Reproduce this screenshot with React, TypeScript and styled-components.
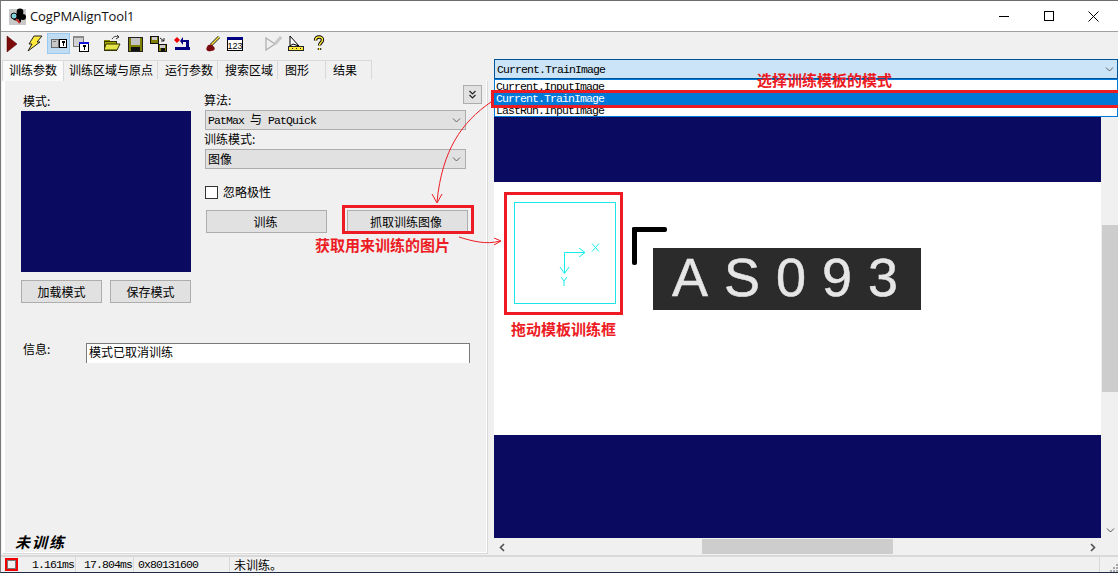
import React from "react";
import styled, { createGlobalStyle } from "styled-components";

const Global = createGlobalStyle`
  html, body { margin: 0; padding: 0; background: #f0f0f0; }
  * { box-sizing: border-box; }
`;
const CJK = `"Noto Sans CJK SC", "Liberation Sans", sans-serif`;

const Root = styled.div`
  position: relative; width: 1118px; height: 573px; overflow: hidden;
  display: flex; flex-direction: column;
  background: #f0f0f0; font: 12px/16px ${CJK}; color: #000;
  border-top: 1px solid #6d6d6d; border-left: 1px solid #7a7a7a; border-bottom: 1px solid #1f2a44;
`;
const TitleBar = styled.div`
  height: 31px; flex: none; display: flex; align-items: center; background: #fff;
  border-bottom: 1px solid #a0a0a0; padding: 0 2px 0 8px;
`;
const TitleText = styled.div`
  font: 13px/16px "Open Sans", "Liberation Sans", sans-serif; margin-left: 4px; flex: 1; color: #111; letter-spacing: -0.1px;
`;
const WinBtn = styled.div`width: 45px; height: 30px; display: flex; align-items: center; justify-content: center; flex: none;`;
const Toolbar = styled.div`height: 27px; flex: none; display: flex; align-items: flex-start; padding-top: 1px;`;
const ToolBtn = styled.div<{ $on?: boolean; $gap?: number }>`
  width: 23px; height: 21px; flex: none; margin-left: ${(p) => p.$gap ?? 0}px;
  display: flex; align-items: center; justify-content: center;
  background: ${(p) => (p.$on ? "#bfdcf2" : "transparent")};
  box-shadow: ${(p) => (p.$on ? "inset 0 0 0 1px #99c9ee" : "none")};
`;
const Icon = styled.svg.attrs({ width: 17, height: 17, viewBox: "0 0 17 17" })`display: block; shape-rendering: crispEdges;`;

const Main = styled.div`flex: 1; min-height: 0; display: flex;`;
const LeftPane = styled.div`width: 493px; flex: none; display: flex; flex-direction: column; padding-left: 1px;`;
const Tabs = styled.div`height: 21px; flex: none; display: flex; align-items: flex-end; position: relative; z-index: 1;`;
const Tab = styled.div<{ $w: number; $pad: number; $on?: boolean }>`
  width: ${(p) => p.$w}px; height: ${(p) => (p.$on ? 21 : 19)}px; flex: none;
  background: ${(p) => (p.$on ? "#fafafa" : "#f0f0f0")};
  border: 1px solid #d9d9d9; border-bottom: none; border-left-width: ${(p) => (p.$on ? 1 : 0)}px;
  padding-left: ${(p) => p.$pad}px; font-size: 12px; line-height: ${(p) => (p.$on ? 18 : 17)}px; white-space: nowrap;
  margin-bottom: ${(p) => (p.$on ? -1 : 1)}px;
`;
const Panel = styled.div`
  position: relative; width: 485px; height: 473px; flex: none; display: flex; flex-direction: column;
  background: #f0f0f0; border-left: 3px solid #fff; border-right: 1px solid #fff; border-bottom: 1px solid #fff;
  box-shadow: 1px 1px 0 #d9d9d9; padding: 14px 0 0 16px;
`;
const TopRow = styled.div`display: flex; gap: 14px;`;
const ModelCol = styled.div`width: 170px; flex: none; display: flex; flex-direction: column;`;
const FieldLabel = styled.div<{ $indent?: number }>`
  height: 17px; margin-left: ${(p) => p.$indent ?? 2}px; line-height: 14px; white-space: nowrap;
`;
const ModelImage = styled.div`height: 161px; background: #0a0a60;`;
const BtnRow = styled.div<{ $top: number; $gap: number; $left?: number }>`
  display: flex; gap: ${(p) => p.$gap}px; margin-top: ${(p) => p.$top}px; margin-left: ${(p) => p.$left ?? 0}px;
`;
const PushBtn = styled.div<{ $w: number; $nudge?: number }>`
  width: ${(p) => p.$w}px; height: 23px; flex: none; background: #e1e1e1; border: 1px solid #adadad;
  display: flex; align-items: center; justify-content: center; font-size: 12px;
  padding-right: ${(p) => p.$nudge ?? 0}px;
`;
const AlgoCol = styled.div`width: 261px; flex: none; display: flex; flex-direction: column; margin-top: -1px;`;
const Select = styled.div`
  height: 20px; background: #e1e1e1; border: 1px solid #adadad; display: flex; align-items: center;
  padding: 0 4px 0 2px; justify-content: space-between; font-size: 12px; flex: none; margin-bottom: 2px;
`;
const Latin = styled.span`font: 11.5px/16px "Liberation Mono", monospace; letter-spacing: -0.9px; white-space: pre;`;
const CheckRow = styled.div`display: flex; align-items: center; gap: 5px; margin-top: 14px; height: 15px; font-size: 12px; line-height: 14px;`;
const CheckLabel = styled.span`position: relative; top: -1px;`;
const CheckBox = styled.div`width: 13px; height: 13px; background: #fff; border: 1px solid #333; flex: none;`;
const Collapse = styled.div`
  position: absolute; left: 458px; top: 5px; width: 19px; height: 19px; background: #e1e1e1; border: 1px solid #adadad;
  display: flex; align-items: center; justify-content: center;
`;
const InfoRow = styled.div`display: flex; margin-top: 40px; align-items: flex-start;`;
const InfoLabel = styled.div`width: 65px; padding: 0 0 0 2px; flex: none; margin-top: -2px; font-size: 12px;`;
const InfoBox = styled.div`
  width: 384px; height: 20px; background: #fff; border: 1px solid #7a7a7a; border-bottom: none;
  padding-left: 2px; line-height: 15px; font-size: 12px;
`;
const Untrained = styled.div`
  margin-top: auto; margin-left: -6px; margin-bottom: 1px; font: italic bold 15px/18px ${CJK}; letter-spacing: 2px;
`;

const RightPane = styled.div`flex: 1; min-width: 0; position: relative; display: flex; flex-direction: column;`;
const Combo = styled.div`
  height: 20px; flex: none; background: #cce4f7; border: 1px solid #005499; display: flex; align-items: center;
  justify-content: space-between; padding: 1px 3px 0 2px;
`;
const DropList = styled.div`
  position: absolute; z-index: 2; left: 0; right: 0; top: 20px; height: 38px; padding-top: 1px;
  background: #fff; border: 1px solid #0078d7; overflow: hidden;
`;
const DropItem = styled.div<{ $on?: boolean }>`
  height: 12px; padding-left: 1px; display: flex; align-items: center;
  background: ${(p) => (p.$on ? "#0078d7" : "transparent")}; color: ${(p) => (p.$on ? "#fff" : "#000")};
`;
const CanvasRow = styled.div`flex: 1; min-height: 0; display: flex; margin-top: 1px;`;
const Canvas = styled.div`position: relative; width: 607px; flex: none; display: flex; flex-direction: column; overflow: hidden;`;
const NavyBand = styled.div<{ $h: number }>`height: ${(p) => p.$h}px; flex: none; background: #0a0a60;`;
const WhiteBand = styled.div`flex: 1; background: #fff;`;
const VScroll = styled.div`flex: 1; margin-left: 1px; position: relative; display: flex; justify-content: center; align-items: flex-end; padding-bottom: 3px;`;
const VThumb = styled.div`position: absolute; left: 0; right: 0; top: 145px; height: 167px; background: #cdcdcd;`;
const HScroll = styled.div`
  height: 16px; flex: none; margin-top: 1px; position: relative; display: flex; justify-content: space-between; align-items: center; padding: 0 21px 0 4px;
`;
const HThumb = styled.div`position: absolute; left: 208px; width: 191px; top: 0; height: 15px; background: #cdcdcd;`;
const Chev = styled.svg.attrs({ width: 9, height: 9, viewBox: "0 0 9 9" })`display: block;`;

const StatusBar = styled.div`height: 17px; flex: none; display: flex; border-top: 2px solid #d9d9d9; align-items: stretch;`;
const LedCell = styled.div`width: 18px; flex: none; display: flex; align-items: center; padding-left: 4px;`;
const StatusCell = styled.div<{ $w: number; $right?: boolean }>`
  width: ${(p) => p.$w}px; flex: none; border-right: 1px solid #d9d9d9; display: flex; align-items: center;
  justify-content: ${(p) => (p.$right ? "flex-end" : "flex-start")};
  padding: ${(p) => (p.$right ? "0 1px 0 0" : "0 0 0 4px")};
  overflow: hidden; white-space: nowrap;
`;
const StatusFill = styled.div`flex: 1; display: flex; align-items: center; padding-left: 4px; font-size: 12px; border-right: 1px solid #d9d9d9;`;
const GripCell = styled.div`width: 18px; flex: none; display: flex; align-items: flex-end; justify-content: flex-end;`;
const StatusLed = styled.div`width: 13px; height: 13px; border: 2px solid #f00000; background: #f0f0f0; box-shadow: inset 0 0 0 1px #777;`;

const Specimen = styled.div`
  position: absolute; left: 159px; top: 168px; width: 268px; height: 62px; background: #2b2b2b; color: #e6e6e6;
  font: 54px/58px "Liberation Sans", sans-serif; letter-spacing: 16px; padding-left: 19px; white-space: nowrap;
  -webkit-text-stroke: 0.5px #e6e6e6;
`;
const CornerV = styled.div`position: absolute; left: 138px; top: 147px; width: 5px; height: 38px; background: #000; border-radius: 2px;`;
const CornerH = styled.div`position: absolute; left: 138px; top: 147px; width: 35px; height: 5px; background: #000; border-radius: 2px;`;
const TrainBox = styled.div`position: absolute; left: 20px; top: 122px; width: 102px; height: 102px; border: 1px solid #19e6e6;`;
const TrainAxes = styled.svg.attrs({ width: 102, height: 102, viewBox: "0 0 102 102" })`position: absolute; left: 20px; top: 122px;`;

const RedBox = styled.div<{ $x: number; $y: number; $w: number; $h: number }>`
  position: absolute; z-index: 5; pointer-events: none; border: 3px solid #ed1c24;
  left: ${(p) => p.$x - 1}px; top: ${(p) => p.$y - 1}px; width: ${(p) => p.$w}px; height: ${(p) => p.$h}px;
`;
const Note = styled.div<{ $x: number; $y: number }>`
  position: absolute; z-index: 6; left: ${(p) => p.$x - 1}px; top: ${(p) => p.$y - 1}px; white-space: nowrap;
  font: bold 15px/18px ${CJK}; color: #ed1c24;
`;
const ArrowLayer = styled.svg`position: absolute; z-index: 6; left: -1px; top: -1px; pointer-events: none;`;

const ChevDown = ({ c = "#606060" }: { c?: string }) => (
  <Chev><path d="M1 2.5 L4.5 6 L8 2.5" fill="none" stroke={c} strokeWidth="1" /></Chev>
);

const Key = ({ x, y }: { x: number; y: number }) => (
  <g><rect x={x} y={y} width="3" height="2" fill="#000" /><rect x={x + 1} y={y + 2} width="1" height="3" fill="#000" /></g>
);

const Icons = {
  play: <Icon><polygon points="3,1 13,9 3,17" fill="#7d0a0a" stroke="#4a0000" strokeWidth="0.5" style={{ shapeRendering: "auto" }} /></Icon>,
  bolt: <Icon><polygon points="7,1 15,1 10,7 13,7 1,16 5,9 2,9" fill="#ffe93a" stroke="#222" strokeWidth="1" style={{ shapeRendering: "auto" }} /></Icon>,
  train: (
    <Icon>
      <rect x="1.5" y="4.5" width="7" height="8" fill="#c8c8c8" stroke="#6a6a6a" />
      <rect x="3" y="6" width="3" height="1" fill="#777" />
      <rect x="9.5" y="4.5" width="7" height="8" fill="#fff" stroke="#000" />
      <Key x={12} y={6} />
    </Icon>
  ),
  train2: (
    <Icon>
      <rect x="0.5" y="1.5" width="10" height="10" fill="#d0d0d0" stroke="#777" />
      <rect x="0" y="1" width="11" height="2" fill="#8a8a8a" />
      <rect x="6.5" y="7.5" width="9" height="9" fill="#fff" stroke="#000" />
      <rect x="6" y="7" width="10" height="2" fill="#1414d8" />
      <Key x={10} y={10} />
    </Icon>
  ),
  open: (
    <Icon>
      <rect x="0" y="5" width="6" height="2" fill="#8c8c00" />
      <rect x="0.5" y="6.5" width="12" height="9" fill="#a8a800" stroke="#333300" />
      <polygon points="2,9 16,9 13,15 0,15" fill="#e6e64a" stroke="#333300" strokeWidth="1" style={{ shapeRendering: "auto" }} />
      <path d="M8 4 C10 1 12 1 14 2 M13 0 L15 2 L12 4" fill="none" stroke="#333" strokeWidth="1" style={{ shapeRendering: "auto" }} />
    </Icon>
  ),
  save: (
    <Icon>
      <rect x="1" y="2" width="15" height="15" fill="#808000" />
      <rect x="1.5" y="2.5" width="14" height="14" fill="none" stroke="#222" />
      <rect x="4" y="3" width="9" height="7" fill="#c4c4c4" />
      <rect x="4" y="12" width="9" height="4" fill="#111" />
    </Icon>
  ),
  saveAll: (
    <Icon>
      <rect x="0.5" y="1.5" width="8" height="7" fill="#808000" stroke="#111" />
      <rect x="2" y="2" width="5" height="3" fill="#ccc" />
      <rect x="8.5" y="9.5" width="8" height="7" fill="#808000" stroke="#111" />
      <rect x="10" y="10" width="5" height="3" fill="#ccc" />
      <rect x="11" y="13" width="4" height="3" fill="#111" />
      <path d="M10 3 L14 6 M14 3 V6 H11" fill="none" stroke="#222" style={{ shapeRendering: "auto" }} />
    </Icon>
  ),
  revert: (
    <Icon>
      <polygon points="4,2 7,5 4,8 1,5" fill="#f00000" style={{ shapeRendering: "auto" }} />
      <rect x="2" y="12" width="15" height="3" fill="#000080" />
      <rect x="13" y="5" width="3" height="8" fill="#000080" />
      <rect x="10" y="5" width="4" height="2" fill="#000080" />
      <polygon points="10,2 10,10 7,6" fill="#000080" style={{ shapeRendering: "auto" }} />
    </Icon>
  ),
  brush: (
    <Icon>
      <path d="M15 2 L7 10" stroke="#222" strokeWidth="3" style={{ shapeRendering: "auto" }} />
      <path d="M15 2 L7 10" stroke="#ffe93a" strokeWidth="1.4" style={{ shapeRendering: "auto" }} />
      <path d="M3 12 C4 9 8 9 9 11 C12 13 11 16 7 16 C4 17 1 15 3 12 Z" fill="#7a0c10" style={{ shapeRendering: "auto" }} />
    </Icon>
  ),
  num: (
    <Icon>
      <rect x="0.5" y="2.5" width="15" height="13" fill="#fff" stroke="#000" />
      <rect x="0" y="2" width="16" height="3" fill="#000080" />
      <text x="8" y="14" fontSize="9" textAnchor="middle" fontFamily="Liberation Sans" fill="#000">123</text>
    </Icon>
  ),
  measure: (
    <Icon>
      <path d="M1 3 L10 9 L1 15 Z M10 9 L16 2" fill="none" stroke="#b0b0b0" strokeWidth="1.3" style={{ shapeRendering: "auto" }} />
      <path d="M10 9 L16 2" stroke="#c8c8c8" strokeWidth="3" style={{ shapeRendering: "auto" }} />
    </Icon>
  ),
  ruler: (
    <Icon>
      <polygon points="2,1 2,11 5,9 11,11" fill="#fff" stroke="#000" strokeWidth="1" style={{ shapeRendering: "auto" }} />
      <rect x="0.5" y="11.5" width="15" height="4" fill="#ffe93a" stroke="#222" />
      <rect x="4" y="13" width="1" height="1" fill="#222" />
      <rect x="8" y="13" width="1" height="1" fill="#222" />
      <rect x="12" y="13" width="1" height="1" fill="#222" />
    </Icon>
  ),
  help: (
    <Icon>
      <path
        d="M4.5 5.5 C4.5 3 6 2 8 2 C10 2 11.5 3 11.5 5 C11.5 7.5 8.5 7.5 8.5 10.5 M8.5 13 V15"
        fill="none" stroke="#000" strokeWidth="3.4" style={{ shapeRendering: "auto" }}
      />
      <path
        d="M4.5 5.5 C4.5 3 6 2 8 2 C10 2 11.5 3 11.5 5 C11.5 7.5 8.5 7.5 8.5 10.5 M8.5 13 V15"
        fill="none" stroke="#ffe93a" strokeWidth="1.5" style={{ shapeRendering: "auto" }}
      />
    </Icon>
  ),
};

const TitleIcon = () => (
  <svg width="17" height="17" viewBox="0 0 17 17" style={{ display: "block", flex: "none" }}>
    <rect x="0" y="1" width="17" height="16" fill="#c9c9c9" />
    <circle cx="11" cy="4" r="3.4" fill="#000" />
    <circle cx="7" cy="9" r="3.4" fill="#000" />
    <circle cx="14" cy="9" r="3" fill="#000" />
    <rect x="10" y="6" width="2" height="8" fill="#000" />
    <circle cx="5" cy="8" r="3" fill="#7fd0d8" stroke="#111" />
    <path d="M7 11 L11 15" stroke="#c03030" strokeWidth="2" />
  </svg>
);

const tabs = [
  { t: "训练参数", w: 62, pad: 6, on: true },
  { t: "训练区域与原点", w: 94, pad: 5 },
  { t: "运行参数", w: 60, pad: 7 },
  { t: "搜索区域", w: 60, pad: 7 },
  { t: "图形", w: 48, pad: 7 },
  { t: "结果", w: 46, pad: 7 },
];

export default function App() {
  return (
    <Root>
      <Global />
      <TitleBar>
        <TitleIcon />
        <TitleText>CogPMAlignTool1</TitleText>
        <WinBtn><svg width="10" height="10" viewBox="0 0 10 10"><path d="M0 5.5H10" stroke="#000" /></svg></WinBtn>
        <WinBtn><svg width="10" height="10" viewBox="0 0 10 10"><rect x="0.5" y="0.5" width="9" height="9" fill="none" stroke="#000" /></svg></WinBtn>
        <WinBtn><svg width="11" height="11" viewBox="0 0 11 11"><path d="M0.5 0.5L10.5 10.5M10.5 0.5L0.5 10.5" stroke="#000" /></svg></WinBtn>
      </TitleBar>
      <Toolbar>
        <ToolBtn>{Icons.play}</ToolBtn>
        <ToolBtn>{Icons.bolt}</ToolBtn>
        <ToolBtn $on>{Icons.train}</ToolBtn>
        <ToolBtn>{Icons.train2}</ToolBtn>
        <ToolBtn $gap={8}>{Icons.open}</ToolBtn>
        <ToolBtn>{Icons.save}</ToolBtn>
        <ToolBtn>{Icons.saveAll}</ToolBtn>
        <ToolBtn>{Icons.revert}</ToolBtn>
        <ToolBtn $gap={8}>{Icons.brush}</ToolBtn>
        <ToolBtn>{Icons.num}</ToolBtn>
        <ToolBtn $gap={15}>{Icons.measure}</ToolBtn>
        <ToolBtn>{Icons.ruler}</ToolBtn>
        <ToolBtn>{Icons.help}</ToolBtn>
      </Toolbar>
      <Main>
        <LeftPane>
          <Tabs>
            {tabs.map((t) => (
              <Tab key={t.t} $w={t.w} $pad={t.pad} $on={t.on}>{t.t}</Tab>
            ))}
          </Tabs>
          <Panel>
            <TopRow>
              <ModelCol>
                <FieldLabel>模式:</FieldLabel>
                <ModelImage />
                <BtnRow $top={8} $gap={8}>
                  <PushBtn $w={81}>加载模式</PushBtn>
                  <PushBtn $w={81}>保存模式</PushBtn>
                </BtnRow>
              </ModelCol>
              <AlgoCol>
                <FieldLabel $indent={-1}>算法:</FieldLabel>
                <Select><span><Latin>PatMax </Latin>与<Latin> PatQuick</Latin></span><ChevDown /></Select>
                <FieldLabel $indent={-1}>训练模式:</FieldLabel>
                <Select><span>图像</span><ChevDown /></Select>
                <CheckRow><CheckBox /><CheckLabel>忽略极性</CheckLabel></CheckRow>
                <BtnRow $top={10} $gap={20} $left={1}>
                  <PushBtn $w={121} $nudge={2}>训练</PushBtn>
                  <PushBtn $w={121} $nudge={3}>抓取训练图像</PushBtn>
                </BtnRow>
              </AlgoCol>
            </TopRow>
            <Collapse><Chev><path d="M1.5 1 L4.5 4 L7.5 1 M1.5 5 L4.5 8 L7.5 5" fill="none" stroke="#222" strokeWidth="1.2" /></Chev></Collapse>
            <InfoRow>
              <InfoLabel>信息:</InfoLabel>
              <InfoBox>模式已取消训练</InfoBox>
            </InfoRow>
            <Untrained>未训练</Untrained>
          </Panel>
        </LeftPane>
        <RightPane>
          <Combo><Latin>Current.TrainImage</Latin><ChevDown /></Combo>
          <DropList>
            <DropItem><Latin>Current.InputImage</Latin></DropItem>
            <DropItem $on><Latin>Current.TrainImage</Latin></DropItem>
            <DropItem><Latin>LastRun.InputImage</Latin></DropItem>
          </DropList>
          <CanvasRow>
            <Canvas>
              <NavyBand $h={102} />
              <WhiteBand />
              <NavyBand $h={103} />
              <TrainBox />
              <TrainAxes>
                <g fill="none" stroke="#14eeee">
                  <path d="M50.5 50.5H71M65 46L71 50.5L65 55M50.5 50.5V71M46 65L50.5 71.5L55 65" />
                  <path d="M78 41.5L85 49.5M85 41.5L78 49.5M47 75L50 79L53 75M50 79V84" />
                </g>
              </TrainAxes>
              <CornerV />
              <CornerH />
              <Specimen>AS093</Specimen>
            </Canvas>
            <VScroll><VThumb /><ChevDown c="#505050" /></VScroll>
          </CanvasRow>
          <HScroll>
            <Chev><path d="M6 1 L2.5 4.5 L6 8" fill="none" stroke="#505050" strokeWidth="1.6" /></Chev>
            <HThumb />
            <Chev><path d="M3 1 L6.5 4.5 L3 8" fill="none" stroke="#505050" strokeWidth="1.6" /></Chev>
          </HScroll>
        </RightPane>
      </Main>
      <StatusBar>
        <LedCell><StatusLed /></LedCell>
        <StatusCell $w={57} $right><Latin>1.161ms</Latin></StatusCell>
        <StatusCell $w={58} $right><Latin>17.804ms</Latin></StatusCell>
        <StatusCell $w={96}><Latin>0x80131600</Latin></StatusCell>
        <StatusFill>未训练。</StatusFill>
        <GripCell>
          <svg width="9" height="9" viewBox="0 0 9 9" style={{ display: "block" }}>
            <path d="M7 1h2v2H7zM4 4h2v2H4zM7 4h2v2H7zM1 7h2v2H1zM4 7h2v2H4zM7 7h2v2H7z" fill="#a8a8a8" />
          </svg>
        </GripCell>
      </StatusBar>

      <RedBox $x={491} $y={90} $w={632} $h={18} />
      <RedBox $x={342} $y={205} $w={132} $h={29} />
      <RedBox $x={504} $y={192} $w={119} $h={123} />
      <Note $x={757} $y={71}>选择训练模板的模式</Note>
      <Note $x={315} $y={236}>获取用来训练的图片</Note>
      <Note $x={511} $y={320}>拖动模板训练框</Note>
      <ArrowLayer width="1118" height="573" viewBox="0 0 1118 573">
        <g fill="none" stroke="#ed1c24" strokeWidth="1">
          <path d="M491 102 C462 122 442 150 437 202" />
          <path d="M432 194 L437 203 L442 194" />
          <path d="M459 237 C472 241 486 245 500 241" />
          <path d="M494 238 L501 241 L494 245" />
        </g>
      </ArrowLayer>
    </Root>
  );
}
